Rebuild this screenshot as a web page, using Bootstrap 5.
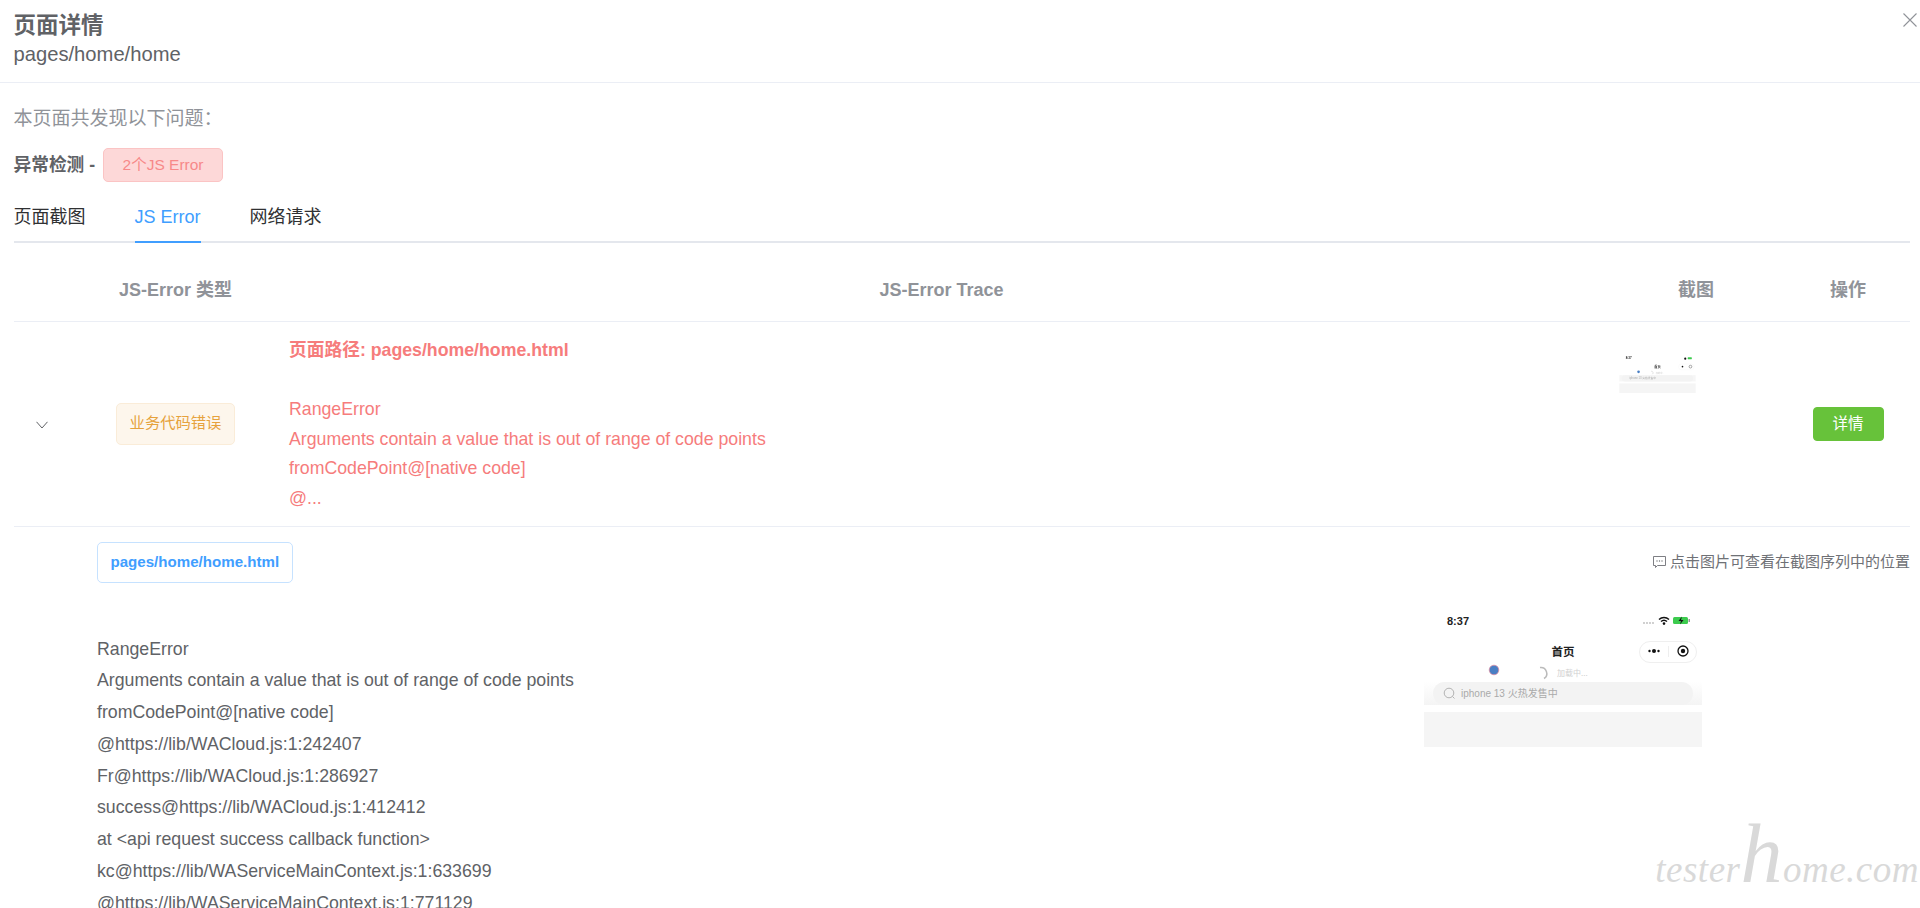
<!DOCTYPE html>
<html lang="zh-CN">
<head>
<meta charset="utf-8">
<title>页面详情</title>
<link rel="stylesheet" href="https://cdn.jsdelivr.net/npm/bootstrap@5.3.0/dist/css/bootstrap.min.css">
<style>
html,body{height:908px;overflow:hidden;background:#fff}
body{font-family:"Liberation Sans","Noto Sans CJK SC",sans-serif;color:#606266;position:relative}
.dlg-head{padding:11px 13.5px 15px;height:83px;border-bottom:1px solid #ebeef5}
.dlg-title{font-size:22.5px;line-height:30px;font-weight:700;color:#606266;margin:0}
.dlg-sub{font-size:20.2px;line-height:26px}
.dlg-close{position:absolute;top:13px;right:3px;width:14px;height:14px;padding:0;border:0;background:none;display:block}
.dlg-body{padding:21px 10px 0 13.5px}
.intro{font-size:19px;line-height:30px;color:#909399}
.sum-row{margin-top:14px;height:34px}
.sum-label{font-size:17.7px;font-weight:700;color:#606266;margin-right:8px}
.err-tag{display:inline-flex;align-items:center;height:34px;padding:0 18.5px;font-size:15.5px;color:#f78989;background:#fdd8d8;border:1px solid #fbc4c4;border-radius:5px}
.tab-row{margin-top:11px;height:50px;border-bottom:2px solid #e4e7ed;gap:49px}
.tab-item{height:50px;line-height:48px;font-size:18px;color:#303133;text-decoration:none;display:block}
.tab-item.on{color:#409eff;border-bottom:2px solid #409eff}
.err-table{table-layout:fixed;width:1896.5px;margin:16px 0 0;border-collapse:collapse;--bs-table-bg:transparent}
.err-table th,.err-table td{border:0;border-bottom:1px solid #ebeef5;padding:0 12px;box-shadow:none}
.err-table th{height:62px;padding-top:2px;font-size:18px;font-weight:700;color:#909399;text-align:center;vertical-align:middle}
.c1{width:60.5px}.c2{width:203px}.c3{width:1329px}.c4{width:180px}.c5{width:124px}
.main-row>td{height:205px;vertical-align:middle;text-align:center}
.main-row>td.trace-cell{text-align:left;font-size:17.73px;line-height:29.5px;color:#f67c7c;padding-top:2px}
.main-row>td.thumb-cell{vertical-align:top;text-align:left;padding:32px 0 0 13px}
.trace-cell b{display:block;font-weight:700;margin-bottom:29.5px}
.chev{display:block;margin:3px 0 0 22px}
.kind-tag{display:inline-flex;align-items:center;height:42px;padding:0 13px;font-size:15.3px;color:#e6a23c;background:#fdf6ec;border:1px solid #faecd8;border-radius:5px;white-space:nowrap}
.act-btn{--bs-btn-bg:#67c23a;--bs-btn-border-color:#67c23a;--bs-btn-color:#fff;--bs-btn-hover-bg:#67c23a;--bs-btn-hover-color:#fff;width:71px;height:34px;padding:0;font-size:15.5px;line-height:32px;border-radius:4px}
.thumb-pic{width:77px;height:39px;display:block;filter:blur(.3px)}
.err-table td.detail-cell{border:0;padding:15px 0 0 83.5px}
.path-tag{display:inline-flex;align-items:center;height:41px;padding:0 12.5px;font-size:15.1px;font-weight:700;color:#409eff;background:#fff;border:1px solid #c6e2ff;border-radius:5px}
.hint{font-size:15px;color:#6f7176}
.stack{margin-top:51px;font-size:17.73px;line-height:31.75px;color:#606266}
.big-pic{width:278px;height:142px;display:block;margin:22px 208px 0 0;flex:none}
.mark-text{position:absolute;right:1px;top:840px;font-family:"Liberation Serif",serif;font-style:italic;font-size:37px;line-height:60px;letter-spacing:.5px;color:#d9d9d9;white-space:nowrap}
.mark-tall{font-size:84px;line-height:0}
</style>
</head>
<body>
<header class="dlg-head">
  <h1 class="dlg-title">页面详情</h1>
  <div class="dlg-sub">pages/home/home</div>
</header>
<button class="dlg-close" type="button" aria-label="关闭"><svg width="14" height="14" viewBox="0 0 14 14" class="d-block"><path d="M.5.500l13 13M13.500.500l-13 13" stroke="#909399" stroke-width="1.100" fill="none"/></svg></button>

<main class="dlg-body">
  <div class="intro">本页面共发现以下问题：</div>
  <div class="sum-row d-flex align-items-center">
    <span class="sum-label">异常检测 -</span>
    <span class="err-tag">2个JS Error</span>
  </div>
  <nav class="tab-row d-flex">
    <a class="tab-item" href="#">页面截图</a>
    <a class="tab-item on" href="#">JS Error</a>
    <a class="tab-item" href="#">网络请求</a>
  </nav>
  <table class="table err-table">
    <colgroup><col class="c1"><col class="c2"><col class="c3"><col class="c4"><col class="c5"></colgroup>
    <thead>
      <tr><th></th><th>JS-Error 类型</th><th>JS-Error Trace</th><th>截图</th><th>操作</th></tr>
    </thead>
    <tbody>
      <tr class="main-row">
        <td class="p-0"><svg class="chev" width="12" height="8" viewBox="0 0 12 8"><path d="M.5.800L6 7 11.500.800" fill="none" stroke="#606266" stroke-width="1"/></svg></td>
        <td class="px-0"><span class="kind-tag">业务代码错误</span></td>
        <td class="trace-cell"><b>页面路径: pages/home/home.html</b>RangeError<br>Arguments contain a value that is out of range of code points<br>fromCodePoint@[native code]<br>@...</td>
        <td class="thumb-cell"><svg class="thumb-pic" viewBox="0 0 278 142">
          <text x="23" y="20" font-family="Liberation Sans" font-weight="700" font-size="11" fill="#222">8:37</text>
          <circle cx="240" cy="17" r="4" fill="#111"/>
          <rect x="249" y="12" width="15" height="7" rx="1.500" fill="#3ccb4e"/>
          <text x="139" y="50.500" text-anchor="middle" font-family="Noto Sans CJK SC" font-weight="700" font-size="11.500" fill="#222">首页</text>
          <rect x="215.500" y="36.500" width="57" height="21" rx="10.500" fill="#fff" stroke="#efefef"/>
          <circle cx="230" cy="46" r="3" fill="#111"/><circle cx="259" cy="46" r="5" fill="none" stroke="#111" stroke-width="1.300"/>
          <circle cx="70" cy="65" r="4.800" fill="#4a7fc4"/>
          <path d="M116 62.500a6 6 0 0 1 4 11" fill="none" stroke="#bbb" stroke-width="1.500"/>
          <text x="133" y="71" font-family="Noto Sans CJK SC" font-size="8" fill="#d0d0d0">加载中...</text>
          <rect x="0" y="77" width="278" height="23" fill="#f6f6f6"/>
          <rect x="9" y="77" width="260" height="23" rx="11.500" fill="#f3f3f3"/>
          <text x="37" y="91.500" font-family="Liberation Sans,Noto Sans CJK SC" font-size="10" fill="#aaa">iphone 13 火热发售中</text>
          <rect x="0" y="107" width="278" height="35" fill="#f5f5f5"/>
        </svg></td>
        <td><a class="btn act-btn" href="#">详情</a></td>
      </tr>
      <tr>
        <td colspan="5" class="detail-cell">
          <div class="d-flex justify-content-between align-items-center">
            <span class="path-tag">pages/home/home.html</span>
            <span class="hint d-inline-flex align-items-center"><svg width="13" height="12" viewBox="0 0 13 12" class="me-1"><path d="M.5.500h12v9h-8l-2 2v-2h-2z" fill="none" stroke="#6f7176" stroke-width=".9"/><g fill="#6f7176"><circle cx="4" cy="5" r=".7"/><circle cx="6.500" cy="5" r=".7"/><circle cx="9" cy="5" r=".7"/></g></svg>点击图片可查看在截图序列中的位置</span>
          </div>
          <div class="d-flex justify-content-between align-items-start">
            <div class="stack">RangeError<br>Arguments contain a value that is out of range of code points<br>fromCodePoint@[native code]<br>@https://lib/WACloud.js:1:242407<br>Fr@https://lib/WACloud.js:1:286927<br>success@https://lib/WACloud.js:1:412412<br>at &lt;api request success callback function&gt;<br>kc@https://lib/WAServiceMainContext.js:1:633699<br>@https://lib/WAServiceMainContext.js:1:771129</div>
            <svg class="big-pic" viewBox="0 0 278 142">
              <defs><linearGradient id="band" x1="0" y1="0" x2="0" y2="1"><stop offset="0" stop-color="#fff"/><stop offset="1" stop-color="#f4f4f4"/></linearGradient></defs>
              <text x="23" y="20" font-family="Liberation Sans" font-weight="700" font-size="11" fill="#222">8:37</text>
              <g fill="#bbb"><circle cx="220" cy="18" r=".9"/><circle cx="223" cy="18" r=".9"/><circle cx="226" cy="18" r=".9"/><circle cx="229" cy="18" r=".9"/></g>
              <path d="M235 14.500a7.500 7.500 0 0 1 10 0M237 16.500a4.600 4.600 0 0 1 6 0" fill="none" stroke="#111" stroke-width="1.500"/><circle cx="240" cy="18.600" r="1.300" fill="#111"/>
              <rect x="249" y="12" width="15" height="7" rx="1.500" fill="#3ccb4e"/><rect x="264.500" y="14" width="1.500" height="3" fill="#999"/>
              <path d="M258 11.500l-3.500 4.500h2.500l-1 3.500 3.500-4.500h-2.500z" fill="#111"/>
              <text x="139" y="50.500" text-anchor="middle" font-family="Noto Sans CJK SC" font-weight="700" font-size="11.500" fill="#222">首页</text>
              <rect x="215.500" y="36.500" width="57" height="21" rx="10.500" fill="#fff" stroke="#efefef"/>
              <g fill="#111"><circle cx="230" cy="46" r="2"/><circle cx="225.500" cy="46" r="1.200"/><circle cx="234.500" cy="46" r="1.200"/></g>
              <path d="M244.500 41v11" stroke="#eee"/>
              <circle cx="259" cy="46" r="5" fill="none" stroke="#111" stroke-width="1.300"/><circle cx="259" cy="46" r="2.200" fill="#111"/>
              <circle cx="70" cy="65" r="4.800" fill="#4a7fc4" stroke="#e58a9c" stroke-width=".7"/>
              <path d="M116 62.500a6 6 0 0 1 4 11" fill="none" stroke="#bbb" stroke-width="1.500"/>
              <text x="133" y="71" font-family="Noto Sans CJK SC" font-size="8" fill="#d0d0d0">加载中...</text>
              <rect x="0" y="77" width="278" height="23" fill="url(#band)"/>
              <rect x="9" y="77" width="260" height="23" rx="11.500" fill="#f3f3f3"/>
              <circle cx="25" cy="88" r="4.800" fill="none" stroke="#aaa" stroke-width=".9"/><path d="M28.500 91.500l2 2" stroke="#aaa" stroke-width=".9"/>
              <text x="37" y="91.500" font-family="Liberation Sans,Noto Sans CJK SC" font-size="10" fill="#aaa">iphone 13 火热发售中</text>
              <rect x="0" y="107" width="278" height="35" fill="#f5f5f5"/>
            </svg>
          </div>
        </td>
      </tr>
    </tbody>
  </table>
</main>
<div class="mark-text">tester<span class="mark-tall">h</span>ome.com</div>
</body>
</html>
